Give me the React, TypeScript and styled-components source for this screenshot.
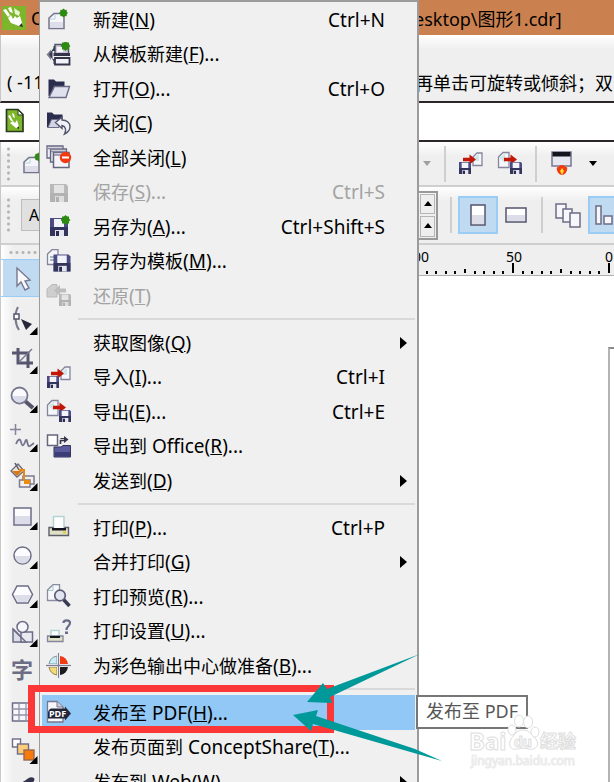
import React from "react";
import styled, { createGlobalStyle } from "styled-components";

const GlobalStyle = createGlobalStyle`
  * { box-sizing: border-box; }
  body { margin: 0; background: #fff; overflow: hidden; }
  button { margin: 0; padding: 0; border: 0; background: none; font: inherit; color: inherit; }
  svg { display: block; flex: none; }
`;

const INK = "#54546e";
const NAVY = "#2b2d4f";
const GREEN = "#2c8a10";

/* ---------- window ---------- */

const Window = styled.div`
  position: relative;
  display: flex;
  flex-direction: column;
  height: 100vh;
  overflow: hidden;
  background: #efefef;
  color: #000;
  font-family: "Noto Sans", "Noto Sans CJK SC", sans-serif;
  font-size: 18px;
  white-space: nowrap;
`;

const SplitBar = styled.header`
  display: grid;
  grid-template-columns: 414px 1fr;
  align-items: center;
  flex: none;
`;

const TitleBar = styled(SplitBar)`
  height: 35px;
  background: #cb804f;
`;

const StatusBar = styled(SplitBar)`
  height: 68px;
  padding-top: 28px;
  border-left: 1px solid #c8c8c8;
  border-bottom: 2px solid #2b2628;
  background: linear-gradient(#fff, #efefef 14px);
`;

const BarStart = styled.div<{ $pad: number }>`
  display: flex;
  align-items: center;
  gap: 5px;
  padding-left: ${(p) => p.$pad}px;
`;

const TabStrip = styled.div`
  display: flex;
  align-items: center;
  flex: none;
  height: 39px;
  padding: 0 0 2px 5px;
  border-bottom: 2px solid #2b2628;
  background: #fff;
`;

const Toolbar = styled.div<{ $height: number }>`
  display: flex;
  align-items: center;
  flex: none;
  height: ${(p) => p.$height}px;
  border-left: 1px solid #c8c8c8;
  border-bottom: 2px solid #cfcfcf;
  background: linear-gradient(#fff, #efefef 14px);
`;

const ToolbarStart = styled.div`
  display: flex;
  align-items: center;
  flex: none;
  gap: 10px;
  width: 418px;
  padding-left: 5px;
`;

const Grip = styled.div<{ $wide?: boolean }>`
  flex: none;
  width: ${(p) => (p.$wide ? 30 : 5)}px;
  height: ${(p) => (p.$wide ? 5 : 36)}px;
  background: radial-gradient(circle at 50% 50%, #b4b4b4 1px, transparent 2px) 0 0 / ${(p) => (p.$wide ? "6px 5px" : "5px 6px")};
`;

const ToolButton = styled.button<{ $width: number; $active?: boolean }>`
  display: flex;
  align-items: center;
  justify-content: center;
  flex: none;
  width: ${(p) => p.$width}px;
  height: 38px;
  border: 2px solid ${(p) => (p.$active ? "#99cdf5" : "transparent")};
  background: ${(p) => (p.$active ? "#c0dbf1" : "none")};
`;

const Divider = styled.div<{ $before: number; $after: number }>`
  flex: none;
  width: 2px;
  height: 36px;
  margin: 0 ${(p) => p.$after}px 0 ${(p) => p.$before}px;
  background: #cfcfcf;
`;

const TextButton = styled.button`
  width: 30px;
  height: 32px;
  border: 1px solid #bdbdbd;
  background: #e0e0e0;
  padding-left: 7px;
  font-size: 16px;
  text-align: left;
`;

const Spinner = styled.div`
  display: flex;
  flex-direction: column;
  flex: none;
  width: 19px;
  height: 49px;
  border: 2px solid #999;
  border-left: 0;
`;

const SpinButton = styled.button`
  display: flex;
  flex: 1;
  align-items: center;
  justify-content: center;
  margin: 1px;
  border: 1px solid #b5b5b5;
  background: #eee;
`;

const Workspace = styled.div`
  display: flex;
  flex: 1;
  min-height: 0;
`;

const Toolbox = styled.aside`
  display: flex;
  flex-direction: column;
  flex: none;
  width: 39px;
  border-left: 1px solid #c8c8c8;
  background: linear-gradient(90deg, #fff, #efefef 12px);
`;

const GripRow = styled.div`
  display: flex;
  align-items: center;
  flex: none;
  height: 14px;
  padding-left: 7px;
`;

const Tool = styled.button<{ $active?: boolean }>`
  flex: none;
  width: 38px;
  height: ${(p) => (p.$active ? 38 : 39)}px;
  ${(p) => p.$active && "padding-left: 2px; background: linear-gradient(#c0dbf1, #c0dbf1) 2px 0 no-repeat; box-shadow: inset 0 -1px #99cdf5, inset 0 1px #99cdf5;"}
`;

const Drawing = styled.main`
  display: flex;
  flex: 1;
  flex-direction: column;
  min-width: 0;
  padding-left: 379px;
`;

const Ruler = styled.div`
  flex: none;
  height: 31px;
  border-bottom: 1px solid #b0b0b0;
  overflow: hidden;
`;

const Canvas = styled.div`
  display: flex;
  flex: 1;
  justify-content: flex-end;
  padding-top: 71px;
  background: #fff;
`;

const PageEdge = styled.div`
  width: 6px;
  border-left: 2px solid #b4b4b4;
  border-top: 2px solid #8c8c8c;
`;

/* ---------- menu ---------- */

const Menu = styled.div`
  position: absolute;
  top: 0;
  left: 39px;
  width: 380px;
  padding: 0 2px;
  border: 1px solid #9b9b9b;
  border-top-width: 2px;
  border-right-width: 2px;
  background: #f0f0f0;
`;

const MenuRow = styled.button<{ $active?: boolean }>`
  display: grid;
  grid-template-columns: 26px 1fr auto 30px;
  align-items: center;
  width: 100%;
  height: 35px;
  padding-left: 4px;
  text-align: left;
  line-height: 24px;
  background: ${(p) => (p.$active ? "#91c8f6" : "none")};
  &:nth-child(even) { height: 34px; }
  &:disabled { color: #a3a3a3; }
`;

const Label = styled.span`
  padding-left: 21px;
`;

const Latin = styled.span`
  font-size: 19px;
`;

const Separator = styled.hr`
  height: 12px;
  margin: 0 0 0 36px;
  border: 0;
  background: linear-gradient(#d9d9d9, #d9d9d9) 0 5px / 100% 2px no-repeat;
`;

const SubmenuMark = styled.span`
  width: 0;
  margin-left: 15px;
  border: 6px solid transparent;
  border-left: 7px solid #000;
  border-right: 0;
`;

/* ---------- overlays ---------- */

const Tooltip = styled.div`
  position: absolute;
  top: 695px;
  left: 416px;
  padding: 1px 8px 3px;
  border: 2px solid #767676;
  background: #fff;
  color: #575757;
  line-height: 26px;
`;

const Highlight = styled.div`
  position: absolute;
  top: 685px;
  left: 28px;
  width: 306px;
  height: 48px;
  border: 7px solid #fc3737;
`;

const Arrows = styled.svg`
  position: absolute;
  top: 650px;
  left: 290px;
`;

const Watermark = styled.svg`
  position: absolute;
  top: 712px;
  left: 466px;
`;

/* ---------- icon parts ---------- */

const Star = ({ x, y, r = 5 }: { x: number; y: number; r?: number }) => (
  <g transform={`translate(${x} ${y})`} fill={GREEN}>
    <rect x={-r * 0.7} y={-r * 0.7} width={r * 1.4} height={r * 1.4} />
    <rect x={-r * 0.7} y={-r * 0.7} width={r * 1.4} height={r * 1.4} transform="rotate(45)" />
  </g>
);

const Floppy = ({ x, y, s, muted }: { x: number; y: number; s: number; muted?: boolean }) => (
  <g transform={`translate(${x} ${y}) scale(${s / 18})`}>
    <path d="M0 0H16L18 2V18H0Z" fill={muted ? "#b9b9b9" : "#4b4c82"} />
    <path d="M0 9H18V18H0Z" fill={muted ? "#b0b0b0" : NAVY} opacity=".75" />
    <rect x="4" y="1" width="10" height="8" fill={muted ? "#e4e4e4" : "#f3f3fb"} />
    <rect x="5" y="12" width="9" height="6" fill={muted ? "#dedede" : "#e4e4ef"} />
    <rect x="6" y="13" width="3" height="5" fill={muted ? "#b0b0b0" : NAVY} />
  </g>
);

const RedArrow = ({ x, y }: { x: number; y: number }) => (
  <path transform={`translate(${x} ${y})`} d="M0-1.7H6.500V-5L13 0L6.500 5V1.700H0Z" fill="#c21606" />
);

const Sheet = ({ d }: { d: string }) => <path d={d} fill="#f4f6fb" stroke="#85859b" strokeWidth="1.3" />;

const NewArt = () => (
  <>
    <path d="M3 21.500V11L8 6.500H18V21.500Z" fill="#f5f5fb" stroke="#74748c" strokeWidth="1.5" />
    <path d="M4 15H17V20.500H4Z" fill="#dedeea" />
    <path d="M4 12H9V7" fill="none" stroke="#b4d4d4" />
    <Star x={17.5} y={6} r={4.5} />
  </>
);

const ImportArt = () => (
  <>
    <Sheet d="M15 14.500V6L19 2H24V14.500Z" />
    <path d="M16 7L21 3V10H16Z" fill="#cfe6e6" />
    <RedArrow x={5} y={8.5} />
    <Floppy x={1} y={11} s={12} />
  </>
);

const ExportArt = () => (
  <>
    <Sheet d="M1.500 16.500V6L6 1.500H12V16.500Z" />
    <path d="M2.500 7L8 2.500V12" fill="#cfe6e6" />
    <RedArrow x={7} y={8.5} />
    <Floppy x={13} y={11} s={12} />
  </>
);

const art: Record<string, React.ReactNode> = {
  create: <NewArt />,
  template: (
    <>
      <path d="M9 2.500H22.500V12H9Z" fill="#c9c9d6" stroke="#55556c" strokeWidth="1.500" />
      <path d="M11 5H17V10H11Z" fill="#f4f4fa" />
      <path d="M7.500 11H24V14H7.500Z" fill="#333349" />
      <path d="M9 16H23.500V22.500H9Z" fill="#f2f2f8" stroke="#33334a" strokeWidth="1.800" />
      <path d="M.5 12.500L5 7.500V18Z" fill="#7c7c94" />
      <path d="M3 12.500L7.500 6V4H9V9H6.500V17H9V22H7.500V19Z" fill="#3c3c54" />
      <Star x={19.5} y={4} />
    </>
  ),
  open: (
    <>
      <path d="M2.500 20V3.500H8L10 5.500H18.500V11H8L4 20Z" fill={NAVY} />
      <path d="M3 21.500L8.500 10.500H23.500L20 21.500Z" fill="#dfe1ee" stroke="#6b6c86" strokeWidth="1.400" />
    </>
  ),
  close: (
    <>
      <path d="M1 16V1.500H6L8 3.500H16.500V9H6L2 17Z" fill={NAVY} />
      <path d="M2 16.500L5.500 8.500H13V16.500Z" fill="#d3d5e4" stroke="#6b6c86" />
      <path d="M9.500 11.500L16 6V9C21 9 24 12 24 15.500C24 19 22 21.500 18.500 23C20.500 19.500 20 15.500 16 14.500V17.500Z" fill="#f1f2f9" stroke="#55566e" strokeWidth="1.400" />
    </>
  ),
  closeAll: (
    <>
      <path d="M1 1H17V13H1Z" fill="#eeeef5" stroke="#66667e" strokeWidth="1.300" />
      <path d="M4.500 4H20.500V17H4.500Z" fill="#e2e2ee" stroke="#66667e" strokeWidth="1.300" />
      <path d="M7.500 7.500H23V22.500H7.500Z" fill="#f4f4fa" stroke="#66667e" strokeWidth="1.500" />
      <path d="M2 3.500H16M5 6.500H20M8 10H22" stroke="#8989a1" strokeWidth="1.500" />
      <circle cx="19.500" cy="12.500" r="5.700" fill="#f03a12" />
      <rect x="16" y="11.500" width="7" height="2" fill="#fff" />
    </>
  ),
  save: <Floppy x={4} y={4} s={18} muted />,
  saveAs: (
    <>
      <Floppy x={4} y={4} s={18} />
      <Star x={19.5} y={6} />
    </>
  ),
  saveTemplate: (
    <>
      <Sheet d="M1.500 15.500V5L6 .700H12V15.500Z" />
      <path d="M4 8H9M4 11H9" stroke="#8ea3ac" strokeWidth="1.500" />
      <Floppy x={7.5} y={5.5} s={17} />
    </>
  ),
  revert: (
    <>
      <path d="M1 14V6L6 1.500H11V14Z" fill="#cecece" stroke="#bababa" />
      <path d="M8 7.500L14 2V5.500H20V9.500H14V13Z" fill="#bdbdbd" />
      <Floppy x={13} y={11} s={12} muted />
    </>
  ),
  import: <ImportArt />,
  export: <ExportArt />,
  office: (
    <>
      <path d="M1.500 1H11.500V11.500H1.500Z" fill="#fff" stroke="#66667e" strokeWidth="1.500" />
      <path d="M14.500 10V6.500H19" fill="none" stroke="#34344c" strokeWidth="1.600" />
      <path d="M14.500 4.500H19" stroke="#34344c" />
      <path d="M18 2L22.500 5.500L18 9Z" fill="#34344c" />
      <path d="M8 23V13H15L17 11.500H24.500V23Z" fill="#5b5c9b" stroke="#34355c" />
      <path d="M9 18H24V22.500H9Z" fill="#3c3d74" />
    </>
  ),
  print: (
    <>
      <path d="M7.500 1.500H18V14H7.500Z" fill="#fff" stroke="#b5d2d2" strokeWidth="1.500" />
      <path d="M3 12.500H7V14H19V12.500H22.500V20.500H3Z" fill="#dfe0c6" stroke="#5d5d6c" strokeWidth="1.400" />
      <path d="M6 13H20V15.500H6Z" fill="#14141c" />
      <path d="M17 17.500H20" stroke="#e6c80a" strokeWidth="1.500" />
    </>
  ),
  preview: (
    <>
      <path d="M1.500 16.500V6L7 .700H13.500V16.500Z" fill="#f7f9fc" stroke="#8a8aa0" strokeWidth="1.300" />
      <path d="M2 6.500H7V1" fill="none" stroke="#9fcaca" />
      <path d="M17.500 15.500L23.500 22" stroke="#3a3a54" strokeWidth="3.500" />
      <circle cx="14" cy="11.500" r="5.300" fill="#e2e4f0" stroke="#5d5d78" strokeWidth="1.700" />
    </>
  ),
  setup: (
    <>
      <path d="M5 11.500H13V17H5Z" fill="#fff" stroke="#b5d2d2" strokeWidth="1.500" />
      <path d="M1.500 17H17V22.500H1.500Z" fill="#dfe0c6" stroke="#85859b" strokeWidth="1.300" />
      <path d="M4 17H14V19H4Z" fill="#14141c" />
      <path d="M17.500 4C17.500 .5 24 .5 24 4C24 7 20.500 7 20.500 11" fill="none" stroke="#6a6b8a" strokeWidth="2.200" />
      <rect x="19" y="12.500" width="3" height="2.500" fill="#6a6b8a" />
    </>
  ),
  prepress: (
    <>
      <path d="M11 3A9 9 0 0 0 3 11H11Z" fill="#c8eef5" stroke="#8097a3" />
      <path d="M14 3A9 9 0 0 1 22 11H14Z" fill="#f03a12" />
      <path d="M11 22A9 9 0 0 1 3 14H11Z" fill="#f5dc74" stroke="#8d8155" />
      <path d="M14 22A9 9 0 0 0 22 14H14Z" fill="#1c1c1c" />
      <path d="M12.500 0V25M0 12.500H25" stroke="#fff" strokeWidth="3" />
      <path d="M12.500 0V25M0 12.500H25" stroke="#7c7c92" strokeWidth="1.300" />
    </>
  ),
  pdf: (
    <>
      <path d="M1.500 1.500H11L17 7V22H1.500Z" fill="#f6f6fb" stroke="#77778e" strokeWidth="1.300" />
      <path d="M11 1.500V7H17" fill="#cfd0de" stroke="#77778e" />
      <path d="M5 8.500H19V6.500L25 13.500L19 20.500V18.500H2V13Q2 10 5 8.500Z" fill="#25253a" />
      <text x="3" y="17" fontSize="9" fontWeight="700" fill="#fff" fontFamily="Noto Sans">PDF</text>
    </>
  ),
};

const MenuIcon = ({ name }: { name?: string }) => (
  <svg width="26" height="25" viewBox="0 0 26 25" aria-hidden="true">
    {name && art[name]}
  </svg>
);

type Item = {
  icon?: string;
  text: string;
  latin?: string;
  accel: string;
  dots?: boolean;
  keys?: string;
  sub?: boolean;
  disabled?: boolean;
  active?: boolean;
};

const groups: Item[][] = [
  [
    { icon: "create", text: "新建", accel: "N", keys: "Ctrl+N" },
    { icon: "template", text: "从模板新建", accel: "F", dots: true },
    { icon: "open", text: "打开", accel: "O", dots: true, keys: "Ctrl+O" },
    { icon: "close", text: "关闭", accel: "C" },
    { icon: "closeAll", text: "全部关闭", accel: "L" },
    { icon: "save", text: "保存", accel: "S", dots: true, keys: "Ctrl+S", disabled: true },
    { icon: "saveAs", text: "另存为", accel: "A", dots: true, keys: "Ctrl+Shift+S" },
    { icon: "saveTemplate", text: "另存为模板", accel: "M", dots: true },
    { icon: "revert", text: "还原", accel: "T", disabled: true },
  ],
  [
    { text: "获取图像", accel: "Q", sub: true },
    { icon: "import", text: "导入", accel: "I", dots: true, keys: "Ctrl+I" },
    { icon: "export", text: "导出", accel: "E", dots: true, keys: "Ctrl+E" },
    { icon: "office", text: "导出到", latin: " Office", accel: "R", dots: true },
    { text: "发送到", accel: "D", sub: true },
  ],
  [
    { icon: "print", text: "打印", accel: "P", dots: true, keys: "Ctrl+P" },
    { text: "合并打印", accel: "G", sub: true },
    { icon: "preview", text: "打印预览", accel: "R", dots: true },
    { icon: "setup", text: "打印设置", accel: "U", dots: true },
    { icon: "prepress", text: "为彩色输出中心做准备", accel: "B", dots: true },
  ],
  [
    { icon: "pdf", text: "发布至", latin: " PDF", accel: "H", dots: true, active: true },
    { text: "发布页面到", latin: " ConceptShare", accel: "T", dots: true },
    { text: "发布到", latin: " Web", accel: "W", sub: true },
  ],
];

const FileMenu = () => (
  <Menu role="menu">
    {groups.map((group, i) => (
      <React.Fragment key={i}>
        {i > 0 && <Separator />}
        <div role="group">
          {group.map((it) => (
            <MenuRow key={it.text} role="menuitem" disabled={it.disabled} $active={it.active}>
              <MenuIcon name={it.icon} />
              <Label>
                {it.text}
                <Latin>
                  {it.latin}(<u>{it.accel}</u>){it.dots && "..."}
                </Latin>
              </Label>
              <Latin>{it.keys}</Latin>
              {it.sub && <SubmenuMark />}
            </MenuRow>
          ))}
        </div>
      </React.Fragment>
    ))}
  </Menu>
);

/* ---------- toolbox ---------- */

const Corner = () => <path d="M36.500 30V38H28.500Z" fill="#000" />;

const tools: { name: string; flyout?: boolean; art: React.ReactNode }[] = [
  {
    name: "形状",
    flyout: true,
    art: (
      <>
        <path d="M17 10C13 17 14 27 18 33" fill="none" stroke="#77778e" strokeWidth="2" />
        <rect x="13" y="17" width="5" height="5" fill="#fff" stroke={INK} strokeWidth="1.500" />
        <path d="M20 22L31 27L25 33Z" fill="#26263c" />
      </>
    ),
  },
  {
    name: "裁剪",
    flyout: true,
    art: (
      <>
        <path d="M17 12V27H32M11 17H27V32" fill="none" stroke="#56566e" strokeWidth="3" />
        <path d="M18 26L31 13" stroke="#77778e" strokeWidth="1.500" />
      </>
    ),
  },
  {
    name: "缩放",
    flyout: true,
    art: (
      <>
        <path d="M24 26L32 33" stroke="#55556c" strokeWidth="4" />
        <circle cx="18.500" cy="20.500" r="8" fill="#fafafd" stroke="#77778e" strokeWidth="1.800" />
        <path d="M12 21H25A6.500 6.500 0 0 1 12 21Z" fill="#d9dbe9" />
      </>
    ),
  },
  {
    name: "手绘",
    flyout: true,
    art: (
      <>
        <path d="M14.500 10V21M9 15.500H20" stroke="#85859b" strokeWidth="1.500" />
        <path d="M15 30C17 25 19 24 20 28S22 33 24 28S26 28 27 31S30 31 33 29" fill="none" stroke="#74748c" strokeWidth="1.800" />
      </>
    ),
  },
  {
    name: "智能填充",
    flyout: true,
    art: (
      <>
        <path d="M10 18L17 11L23 18L16 24Z" fill="#f3e4cd" stroke="#6b6b82" strokeWidth="1.300" />
        <path d="M11 18H21L16 23Z" fill="#d87918" />
        <path d="M14 10L18 17" stroke="#565670" strokeWidth="1.500" />
        <path d="M22 23H33V31H22Z" fill="#f4efe9" stroke="#7b7b93" strokeWidth="1.500" />
        <path d="M18.500 27H29V34H18.500Z" fill="#f4efe9" stroke="#7b7b93" strokeWidth="1.500" />
        <path d="M23 27H29V31H23Z" fill="#ea8b12" />
        <path d="M18 17H23V28" fill="none" stroke="#e98912" strokeWidth="2" />
      </>
    ),
  },
  {
    name: "矩形",
    flyout: true,
    art: (
      <>
        <rect x="13" y="16" width="17" height="17" fill="#fcfcff" stroke="#6c6c86" strokeWidth="1.500" />
        <path d="M14 24H29V32H14Z" fill="#dddde9" />
      </>
    ),
  },
  {
    name: "椭圆形",
    flyout: true,
    art: (
      <>
        <circle cx="21.500" cy="24.500" r="8.500" fill="#fcfcff" stroke="#6c6c86" strokeWidth="1.500" />
        <path d="M14 25H29A7.500 7.500 0 0 1 14 25Z" fill="#dddde9" />
      </>
    ),
  },
  {
    name: "多边形",
    flyout: true,
    art: (
      <>
        <path d="M11.500 24.500L16 16H27L31.500 24.500L27 33H16Z" fill="#fcfcff" stroke="#6c6c86" strokeWidth="1.500" />
        <path d="M13 25H30L26 32H17Z" fill="#dddde9" />
      </>
    ),
  },
  {
    name: "基本形状",
    flyout: true,
    art: (
      <>
        <path d="M12 20V33H25Z" fill="#dddde9" stroke="#6c6c86" strokeWidth="1.500" />
        <path d="M20 23H31.500V33H20Z" fill="#eaeaf2" stroke="#6c6c86" strokeWidth="1.500" />
        <circle cx="21.500" cy="18" r="5.500" fill="#f5f5fa" stroke="#6c6c86" strokeWidth="1.500" />
        <path d="M12 20L25 33" stroke="#6c6c86" strokeWidth="1.500" />
      </>
    ),
  },
  {
    name: "文本",
    art: (
      <text x="10" y="30" fontSize="22" fontWeight="700" fill="#6c6c84" fontFamily="Noto Sans CJK SC">
        字
      </text>
    ),
  },
  {
    name: "表格",
    art: (
      <>
        <rect x="11.500" y="16" width="20" height="18" fill="#f6f6fb" stroke="#6c6c86" strokeWidth="1.500" />
        <path d="M18 16V34M25 16V34M11 22H32M11 28H32" stroke="#9494a8" strokeWidth="1.300" />
      </>
    ),
  },
  {
    name: "调和",
    flyout: true,
    art: (
      <>
        <rect x="11.500" y="13" width="8" height="8" fill="#fff" stroke="#6c6c86" strokeWidth="1.400" />
        <rect x="16.500" y="18" width="11" height="10" fill="#fbcd78" stroke="#6c6c86" strokeWidth="1.400" />
        <rect x="23" y="24" width="10" height="10" fill="#f77a0b" stroke="#9b6a4e" strokeWidth="1.400" />
      </>
    ),
  },
  {
    name: "滴管",
    art: (
      <>
        <path d="M33 13C30 11 27 13 25 15L20 18L27 25L31 18C33 17 34 15 33 13Z" fill="#34344c" />
        <path d="M23 21L13 32" stroke="#77778e" strokeWidth="3" />
      </>
    ),
  },
];

const CorelMark = () => (
  <svg width="24" height="24" viewBox="0 0 24 24" aria-hidden="true">
    <rect width="24" height="24" fill="#7db62a" />
    <path d="M1 4L4 3L8 9L6 11Z" fill="#fff" />
    <path d="M6 2L9 1L11 7L8 6Z" fill="#fff" />
    <path d="M12 2L18 6L17 10L13 8Z" fill="#e9f4d6" />
    <path d="M6 12L9 9L11 13L13 10L15 12L18 10L21 20L17 20L9 17Z" fill="#fff" />
    <path d="M21 21L17 20L20 17Z" fill="#253214" />
  </svg>
);

const DocMark = () => (
  <svg width="20" height="25" viewBox="0 0 20 25" aria-hidden="true">
    <path d="M1.500 1.500H13L18 6.500V23.500H1.500Z" fill="#7db62a" stroke="#2b3b22" strokeWidth="1.700" />
    <path d="M3 8L5 7L8 13L6 13Z" fill="#fff" />
    <path d="M7 5L9 6L10 10L8 9Z" fill="#fff" />
    <path d="M5 15L8 13L10 15L12 12L14 19L11 20Z" fill="#fff" />
    <path d="M14 21L12 20L14 18Z" fill="#253214" />
    <path d="M13 2V7H18Z" fill="#fff" stroke="#2b3b22" />
  </svg>
);

const Caret = ({ color }: { color: string }) => (
  <svg width="10" height="6" viewBox="0 0 10 6" aria-hidden="true">
    <path d="M1 0H9L5 5Z" fill={color} />
  </svg>
);

const UpMark = () => (
  <svg width="10" height="6" viewBox="0 0 10 6" aria-hidden="true">
    <path d="M1 5H9L5 0Z" fill="#000" />
  </svg>
);

const rulerTicks = Array.from({ length: 21 }, (_, i) => Math.round(7.5 + i * 9.6));

export default function App() {
  return (
    <Window>
      <GlobalStyle />
      <TitleBar>
        <BarStart $pad={2}>
          <CorelMark />
          <span>C</span>
        </BarStart>
        <span>esktop\图形1.cdr]</span>
      </TitleBar>
      <StatusBar>
        <BarStart $pad={6}>( -11</BarStart>
        <span>再单击可旋转或倾斜；双击</span>
      </StatusBar>
      <TabStrip>
        <DocMark />
      </TabStrip>

      <Toolbar $height={45}>
        <ToolbarStart>
          <Grip />
          <button aria-label="新建">
            <svg width="26" height="25" viewBox="0 0 26 25"><NewArt /></svg>
          </button>
        </ToolbarStart>
        <ToolButton $width={16} aria-label="撤消列表"><Caret color="#a0a0a0" /></ToolButton>
        <Divider $before={9} $after={9} />
        <ToolButton $width={32} aria-label="导入">
          <svg width="26" height="25" viewBox="0 0 26 25"><ImportArt /></svg>
        </ToolButton>
        <ToolButton $width={46} aria-label="导出">
          <svg width="26" height="25" viewBox="0 0 26 25"><ExportArt /></svg>
        </ToolButton>
        <Divider $before={2} $after={9} />
        <ToolButton $width={32} aria-label="应用程序启动器">
          <svg width="22" height="25" viewBox="0 0 22 25">
            <rect x="1" y="1" width="19" height="14" fill="#e7e7f1" stroke="#77778e" strokeWidth="1.500" />
            <rect x="1.500" y="1" width="18" height="4.500" fill="#14141e" />
            <path d="M6 16C8 17 8 14 11 14S14 17 16 16C17 20 14 24 11 24S5 20 6 16Z" fill="#f5390f" />
            <path d="M9 20L11 17L13 20L11 24Z" fill="#fbdc2f" />
          </svg>
        </ToolButton>
        <ToolButton $width={30} aria-label="启动器列表"><Caret color="#000" /></ToolButton>
      </Toolbar>

      <Toolbar $height={58}>
        <ToolbarStart>
          <Grip />
          <TextButton>A</TextButton>
        </ToolbarStart>
        <Spinner>
          <SpinButton aria-label="增加宽度"><UpMark /></SpinButton>
          <SpinButton aria-label="增加高度"><UpMark /></SpinButton>
        </Spinner>
        <Divider $before={12} $after={6} />
        <ToolButton $width={40} $active aria-label="纵向">
          <svg width="16" height="22" viewBox="0 0 16 22">
            <rect x="1" y="1" width="14" height="20" fill="#fff" stroke={INK} strokeWidth="1.500" />
            <path d="M2 11H14V20H2Z" fill="#dddde9" />
          </svg>
        </ToolButton>
        <ToolButton $width={36} aria-label="横向">
          <svg width="22" height="17" viewBox="0 0 22 17">
            <rect x="1" y="1" width="20" height="14" fill="#fff" stroke={INK} strokeWidth="1.500" />
            <path d="M2 8H20V14H2Z" fill="#dddde9" />
          </svg>
        </ToolButton>
        <Divider $before={7} $after={5} />
        <ToolButton $width={40} aria-label="所有页面">
          <svg width="26" height="25" viewBox="0 0 26 25" fill="#f6f6fb" stroke="#6c6c86" strokeWidth="1.500">
            <rect x="1" y="1" width="10" height="14" />
            <rect x="8" y="6" width="9" height="13" />
            <rect x="15" y="10" width="10" height="14" />
          </svg>
        </ToolButton>
        <ToolButton $width={44} $active aria-label="当前页">
          <svg width="30" height="20" viewBox="0 0 30 20" fill="#f6f6fb" stroke="#6c6c86" strokeWidth="1.500">
            <rect x="1" y="1" width="5" height="18" />
            <rect x="9" y="11" width="8" height="8" />
            <rect x="20" y="5" width="9" height="14" />
          </svg>
        </ToolButton>
      </Toolbar>

      <Workspace>
        <Toolbox>
          <GripRow><Grip $wide /></GripRow>
          <Tool $active aria-label="选择">
            <svg width="36" height="38" viewBox="0 0 36 38">
              <path d="M14 9L14 27L18 23L22 31L26 29L22 22L27 21Z" fill="#f8f8fc" stroke="#77778e" strokeWidth="1.400" />
            </svg>
          </Tool>
          {tools.map((t) => (
            <Tool key={t.name} aria-label={t.name}>
              <svg width="38" height="39" viewBox="0 0 38 39">
                {t.art}
                {t.flyout && <Corner />}
              </svg>
            </Tool>
          ))}
        </Toolbox>
        <Drawing>
          <Ruler>
            <svg width="196" height="30" viewBox="0 0 196 30" fontFamily="Noto Sans" fontSize="14" fill="#000">
              {rulerTicks.map((x, i) => (
                <rect key={i} x={x} width="2" y={i % 10 === 9 ? 18 : i % 5 === 4 ? 24 : 26} height={i % 10 === 9 ? 10 : i % 5 === 4 ? 4 : 3} />
              ))}
              <text x="-5" y="17">00</text>
              <text x="88" y="17">50</text>
              <text x="187" y="17">0</text>
            </svg>
          </Ruler>
          <Canvas><PageEdge /></Canvas>
        </Drawing>
      </Workspace>

      <FileMenu />
      <Tooltip role="tooltip">发布至 PDF</Tooltip>
      <Watermark width="120" height="62" viewBox="0 0 120 62" fill="#fff" stroke="#dedede">
        <g strokeWidth="1">
          <text x="3" y="38" fontSize="24" fontWeight="700" fontFamily="Noto Sans">Bai</text>
          <path d="M57 18C64 18 66 24 70 27C74 32 70 39 63 37C59 36 55 36 51 37C44 39 42 32 45 27C48 24 50 18 57 18Z" />
          <ellipse cx="46" cy="18" rx="4" ry="5" />
          <ellipse cx="53" cy="9" rx="4.500" ry="6" />
          <ellipse cx="62" cy="10" rx="4.500" ry="6" />
          <ellipse cx="69" cy="20" rx="4" ry="5" />
          <text x="74" y="36" fontSize="18" fontWeight="700" fontFamily="Noto Sans CJK SC">经验</text>
        </g>
        <text x="48" y="35" fontSize="14" fontWeight="700" fontFamily="Noto Sans">du</text>
        <text x="5" y="53" fontSize="12" fontFamily="Noto Sans" fill="#e2e2e2" stroke="#ececec">
          jingyan.baidu.com
        </text>
      </Watermark>
      <Highlight />
      <Arrows width="154" height="114" viewBox="290 650 154 114" fill="#00999a" aria-hidden="true">
        <path d="M307 702L323 683L327 689L420 654L330 697L332 703Z" />
        <path d="M293 715L318 710L316 716L415 749L442 761L414 753L313 724L311 731Z" />
      </Arrows>
    </Window>
  );
}
